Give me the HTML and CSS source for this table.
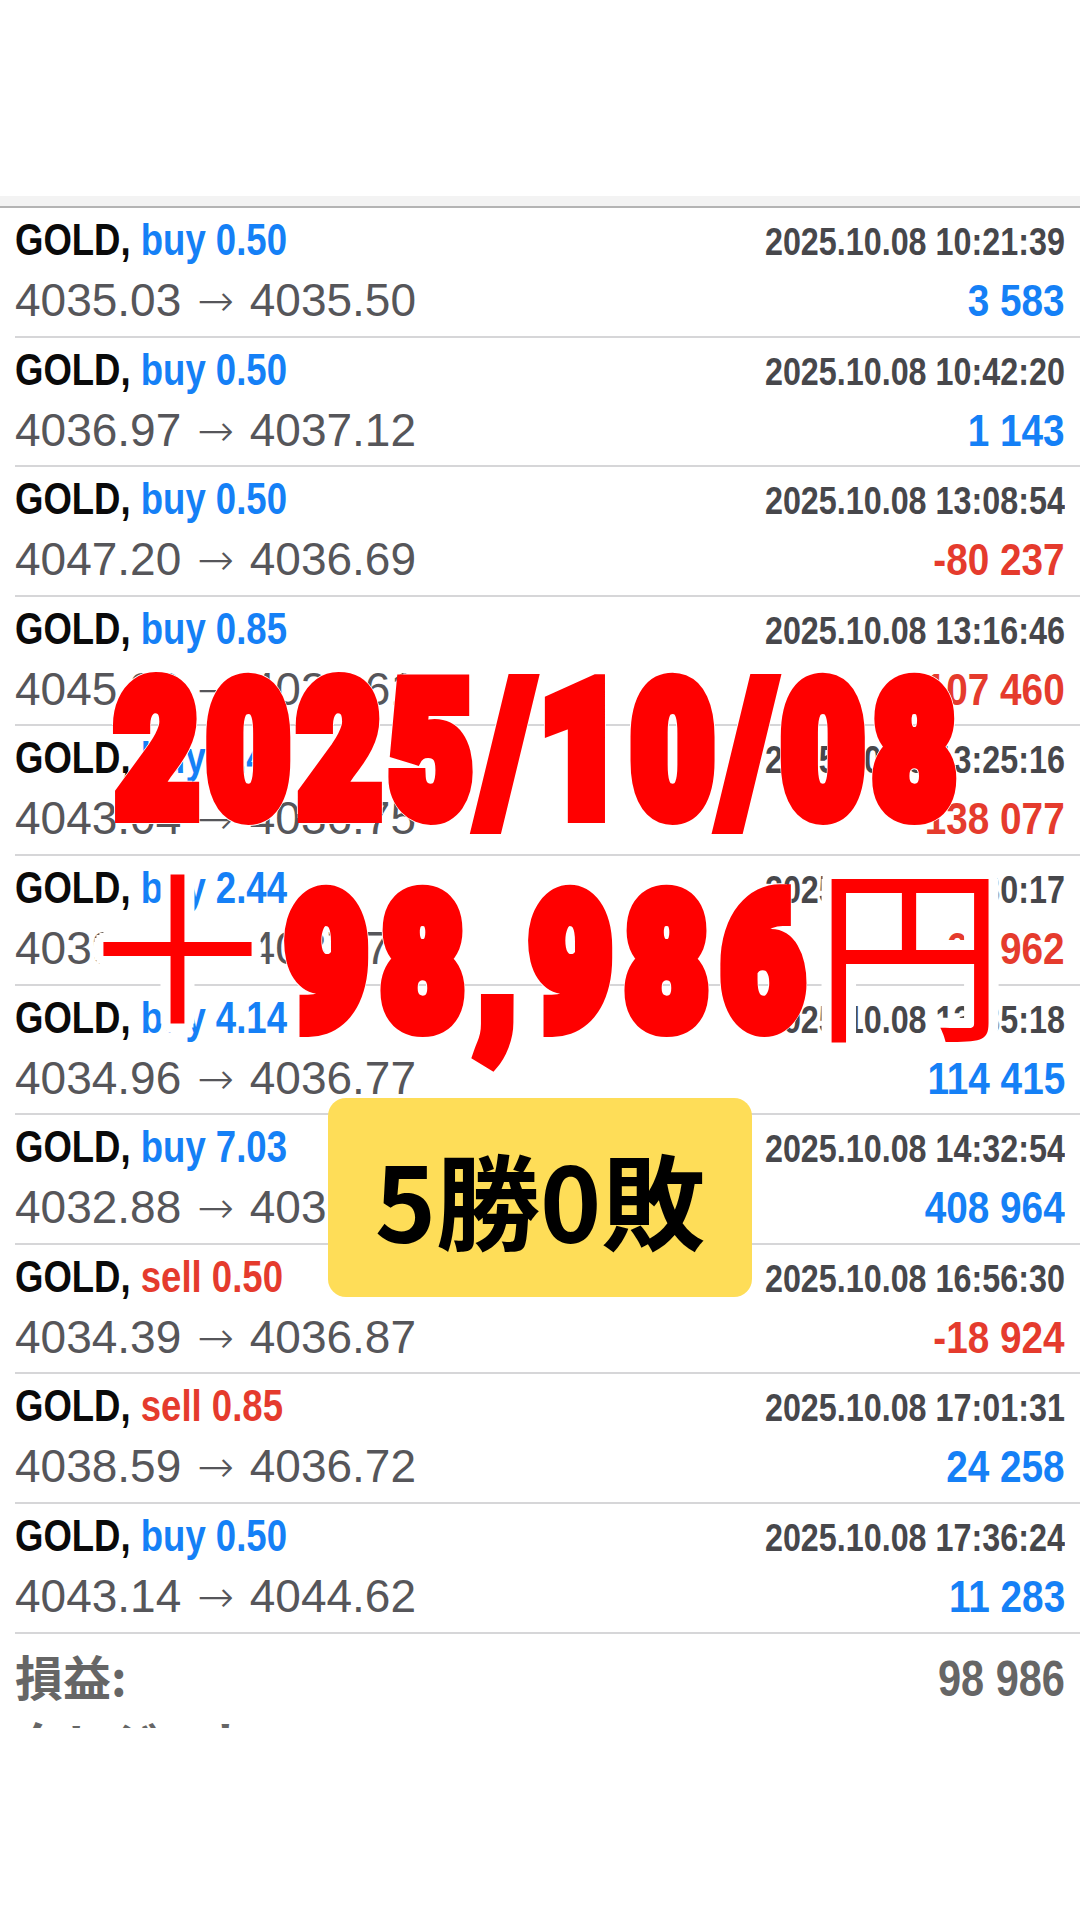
FILE: index.html
```html
<!DOCTYPE html>
<html lang="ja">
<head>
<meta charset="utf-8">
<title>GOLD deals</title>
<link rel="stylesheet" href="styles.css">
</head>
<body>
<div class="screen">
  <div class="top-space"></div>
  <div class="band"></div>
  <ul class="deals">
    <li class="deal">
      <div class="line1"><span class="sym"><span class="c-l">GOLD, <span class="buy">buy 0.50</span></span></span><span class="time"><span class="c-r">2025.10.08 10:21:39</span></span></div>
      <div class="line2"><span class="price">4035.03 <span class="arr">→</span> 4035.50</span><span class="profit pos"><span class="c-r">3 583</span></span></div>
    </li>
    <li class="deal">
      <div class="line1"><span class="sym"><span class="c-l">GOLD, <span class="buy">buy 0.50</span></span></span><span class="time"><span class="c-r">2025.10.08 10:42:20</span></span></div>
      <div class="line2"><span class="price">4036.97 <span class="arr">→</span> 4037.12</span><span class="profit pos"><span class="c-r">1 143</span></span></div>
    </li>
    <li class="deal">
      <div class="line1"><span class="sym"><span class="c-l">GOLD, <span class="buy">buy 0.50</span></span></span><span class="time"><span class="c-r">2025.10.08 13:08:54</span></span></div>
      <div class="line2"><span class="price">4047.20 <span class="arr">→</span> 4036.69</span><span class="profit neg"><span class="c-r">-80 237</span></span></div>
    </li>
    <li class="deal">
      <div class="line1"><span class="sym"><span class="c-l">GOLD, <span class="buy">buy 0.85</span></span></span><span class="time"><span class="c-r">2025.10.08 13:16:46</span></span></div>
      <div class="line2"><span class="price">4045.39 <span class="arr">→</span> 4036.61</span><span class="profit neg"><span class="c-r">-107 460</span></span></div>
    </li>
    <li class="deal">
      <div class="line1"><span class="sym"><span class="c-l">GOLD, <span class="buy">buy 1.44</span></span></span><span class="time"><span class="c-r">2025.10.08 13:25:16</span></span></div>
      <div class="line2"><span class="price">4043.04 <span class="arr">→</span> 4036.75</span><span class="profit neg"><span class="c-r">-138 077</span></span></div>
    </li>
    <li class="deal">
      <div class="line1"><span class="sym"><span class="c-l">GOLD, <span class="buy">buy 2.44</span></span></span><span class="time"><span class="c-r">2025.10.08 13:30:17</span></span></div>
      <div class="line2"><span class="price">4039.51 <span class="arr">→</span> 4037.78</span><span class="profit neg"><span class="c-r">-61 962</span></span></div>
    </li>
    <li class="deal">
      <div class="line1"><span class="sym"><span class="c-l">GOLD, <span class="buy">buy 4.14</span></span></span><span class="time"><span class="c-r">2025.10.08 13:35:18</span></span></div>
      <div class="line2"><span class="price">4034.96 <span class="arr">→</span> 4036.77</span><span class="profit pos"><span class="c-r">114 415</span></span></div>
    </li>
    <li class="deal">
      <div class="line1"><span class="sym"><span class="c-l">GOLD, <span class="buy">buy 7.03</span></span></span><span class="time"><span class="c-r">2025.10.08 14:32:54</span></span></div>
      <div class="line2"><span class="price">4032.88 <span class="arr">→</span> 4036.79</span><span class="profit pos"><span class="c-r">408 964</span></span></div>
    </li>
    <li class="deal">
      <div class="line1"><span class="sym"><span class="c-l">GOLD, <span class="sell">sell 0.50</span></span></span><span class="time"><span class="c-r">2025.10.08 16:56:30</span></span></div>
      <div class="line2"><span class="price">4034.39 <span class="arr">→</span> 4036.87</span><span class="profit neg"><span class="c-r">-18 924</span></span></div>
    </li>
    <li class="deal">
      <div class="line1"><span class="sym"><span class="c-l">GOLD, <span class="sell">sell 0.85</span></span></span><span class="time"><span class="c-r">2025.10.08 17:01:31</span></span></div>
      <div class="line2"><span class="price">4038.59 <span class="arr">→</span> 4036.72</span><span class="profit pos"><span class="c-r">24 258</span></span></div>
    </li>
    <li class="deal">
      <div class="line1"><span class="sym"><span class="c-l">GOLD, <span class="buy">buy 0.50</span></span></span><span class="time"><span class="c-r">2025.10.08 17:36:24</span></span></div>
      <div class="line2"><span class="price">4043.14 <span class="arr">→</span> 4044.62</span><span class="profit pos"><span class="c-r">11 283</span></span></div>
    </li>
  </ul>
  <div class="totals">
    <div class="total-row"><span class="label">損益:</span><span class="total-val"><span class="c-r">98 986</span></span></div>
    <div class="total-row"><span class="label">クレジット:</span></div>
  </div>

  <div class="overlay">
    <div class="big-line"><span class="num">2025/10/08</span></div>
    <div class="big-line amount"><span class="cjk plus">＋</span><span class="num num-amt">98,986</span><span class="cjk">円</span></div>
    <div class="badge">5勝0敗</div>
  </div>
</div>
</body>
</html>
```

FILE: styles.css
```css
html, body {
  margin: 0;
  padding: 0;
  background: #ffffff;
}

.screen {
  position: relative;
  width: 1080px;
  height: 1920px;
  overflow: hidden;
  background: #ffffff;
  font-family: "Liberation Sans", Arial, sans-serif;
}

.top-space {
  height: 196px;
}

.band {
  height: 10px;
  background: #f3f3f3;
  border-bottom: 2px solid #b4b4b4;
}

.deals {
  list-style: none;
  margin: 0;
  padding: 0;
}

.deal {
  box-sizing: border-box;
  height: 129.6px;
  margin-left: 15px;
  padding: 2px 15px 0 0;
  border-bottom: 2px solid #d6d6d8;
}

.line1, .line2 {
  display: flex;
  justify-content: space-between;
  align-items: baseline;
  height: 60px;
  line-height: 60px;
}

.c-l, .c-r {
  display: inline-block;
  transform: scaleX(0.83);
  white-space: nowrap;
}
.c-l { transform-origin: left center; }
.c-r { transform-origin: right center; }

.sym {
  font-size: 44px;
  font-weight: 700;
  color: #0a0a0a;
}

.buy { color: #1580f6; }
.sell { color: #e53b2d; }

.time {
  font-size: 38px;
  font-weight: 700;
  color: #47474b;
}
.time .c-r { transform: scaleX(0.85); }

.price {
  font-size: 46px;
  color: #56565a;
  white-space: nowrap;
}

.arr {
  font-family: "DejaVu Sans", sans-serif;
  font-size: 44px;
  font-weight: 200;
  margin: 0 3px;
}

.profit {
  font-size: 45px;
  font-weight: 700;
}
.profit .c-r { transform: scaleX(0.86); }
.pos { color: #1580f6; }
.neg { color: #e53b2d; }

.totals {
  height: 94px;
  overflow: hidden;
  margin-left: 15px;
  padding-right: 15px;
}

.total-row {
  display: flex;
  justify-content: space-between;
  align-items: baseline;
  height: 66px;
  line-height: 66px;
}
.total-row:first-child {
  margin-top: 8px;
}

.label {
  font-family: "Noto Sans CJK JP", "Liberation Sans", sans-serif;
  font-weight: 700;
  font-size: 48px;
  color: #666666;
}

.total-val {
  font-size: 50px;
  font-weight: 700;
  color: #666666;
}

/* overlay headline */
.overlay {
  position: absolute;
  top: 651px;
  left: 0;
  width: 1080px;
  display: flex;
  flex-direction: column;
  align-items: center;
}

.big-line {
  height: 200px;
  line-height: 200px;
  display: flex;
  align-items: baseline;
  justify-content: center;
  white-space: nowrap;
  text-shadow:
    10px 0 0 #fff, -10px 0 0 #fff, 0 10px 0 #fff, 0 -10px 0 #fff,
    7px 7px 0 #fff, -7px 7px 0 #fff, 7px -7px 0 #fff, -7px -7px 0 #fff,
    9px 4px 0 #fff, -9px 4px 0 #fff, 9px -4px 0 #fff, -9px -4px 0 #fff,
    4px 9px 0 #fff, -4px 9px 0 #fff, 4px -9px 0 #fff, -4px -9px 0 #fff;
}

.amount {
  margin-top: -14px;
}

.num {
  display: inline-block;
  font-family: Roboto, "Liberation Sans", sans-serif;
  font-weight: 900;
  font-size: 184px;
  letter-spacing: 12px;
  color: #ff0000;
  -webkit-text-stroke: 18px #ff0000;
  transform: scaleX(0.77);
  transform-origin: center;
}

.num-amt {
  letter-spacing: 18px;
  margin: 0 -82px 0 -74px;
}

.cjk {
  font-family: "Noto Sans CJK JP", sans-serif;
  font-weight: 400;
  font-size: 190px;
  color: #ff0000;
}

.plus {
  font-size: 204px;
}

.badge {
  margin-top: 61px;
  width: 424px;
  height: 199px;
  border-radius: 18px;
  background: #fedd58;
  display: flex;
  align-items: center;
  justify-content: center;
  font-family: "Noto Sans CJK JP", sans-serif;
  font-weight: 700;
  font-size: 104px;
  color: #000000;
}
```
